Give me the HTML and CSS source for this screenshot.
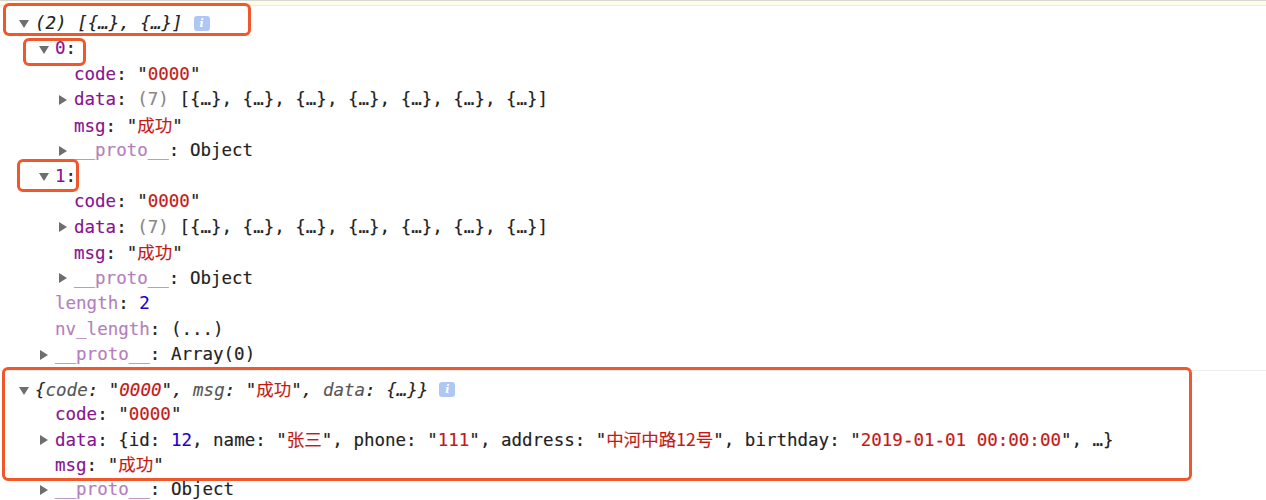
FILE: index.html
```html
<!DOCTYPE html>
<html>
<head>
<meta charset="utf-8">
<link rel="stylesheet" href="styles.css">
</head>
<body>
<div class="topstrip"></div>
<div class="console">
  <div class="block first">
    <div class="row l0"><span class="tri down"></span><span class="txt summary">(2) [{…}, {…}]</span><span class="info">i</span></div>
    <div class="row l1"><span class="tri down"></span><span class="txt"><span class="key">0</span>:</span></div>
    <div class="row l2"><span class="tri none"></span><span class="txt"><span class="key">code</span>: "<span class="str">0000</span>"</span></div>
    <div class="row l2"><span class="tri right"></span><span class="txt"><span class="key">data</span>: <span class="gray">(7)</span> [{…}, {…}, {…}, {…}, {…}, {…}, {…}]</span></div>
    <div class="row l2"><span class="tri none"></span><span class="txt"><span class="key">msg</span>: "<span class="str cjk">成功</span>"</span></div>
    <div class="row l2"><span class="tri right"></span><span class="txt"><span class="key dim">__proto__</span>: Object</span></div>
    <div class="row l1"><span class="tri down"></span><span class="txt"><span class="key">1</span>:</span></div>
    <div class="row l2"><span class="tri none"></span><span class="txt"><span class="key">code</span>: "<span class="str">0000</span>"</span></div>
    <div class="row l2"><span class="tri right"></span><span class="txt"><span class="key">data</span>: <span class="gray">(7)</span> [{…}, {…}, {…}, {…}, {…}, {…}, {…}]</span></div>
    <div class="row l2"><span class="tri none"></span><span class="txt"><span class="key">msg</span>: "<span class="str cjk">成功</span>"</span></div>
    <div class="row l2"><span class="tri right"></span><span class="txt"><span class="key dim">__proto__</span>: Object</span></div>
    <div class="row l1"><span class="tri none"></span><span class="txt"><span class="key dim">length</span>: <span class="num">2</span></span></div>
    <div class="row l1"><span class="tri none"></span><span class="txt"><span class="key dim">nv_length</span>: (...)</span></div>
    <div class="row l1"><span class="tri right"></span><span class="txt"><span class="key dim">__proto__</span>: Array(0)</span></div>
  </div>
  <div class="block second">
    <div class="row l0"><span class="tri down"></span><span class="txt summary">{<span class="pkey">code</span>: "<span class="str">0000</span>", <span class="pkey">msg</span>: "<span class="str cjk">成功</span>", <span class="pkey">data</span>: {…}}</span><span class="info">i</span></div>
    <div class="row l1"><span class="tri none"></span><span class="txt"><span class="key">code</span>: "<span class="str">0000</span>"</span></div>
    <div class="row l1"><span class="tri right"></span><span class="txt"><span class="key">data</span>: {id: <span class="num">12</span>, name: "<span class="str cjk">张三</span>", phone: "<span class="str">111</span>", address: "<span class="str cjk">中河中路12号</span>", birthday: "<span class="str">2019-01-01 00:00:00</span>", …}</span></div>
    <div class="row l1"><span class="tri none"></span><span class="txt"><span class="key">msg</span>: "<span class="str cjk">成功</span>"</span></div>
    <div class="row l1"><span class="tri right"></span><span class="txt"><span class="key dim">__proto__</span>: Object</span></div>
  </div>
</div>
<div class="mark m1"></div>
<div class="mark m2"></div>
<div class="mark m3"></div>
<div class="mark m4"></div>
</body>
</html>
```

FILE: styles.css
```css
html, body {
  margin: 0;
  padding: 0;
  background: #ffffff;
}
body {
  width: 1266px;
  height: 500px;
  overflow: hidden;
  position: relative;
  font-family: "DejaVu Sans Mono", "Liberation Mono", "Noto Sans CJK SC", monospace;
  font-size: 17.5px;
  color: #222222;
  -webkit-text-stroke: 0.15px currentColor;
}
.topstrip {
  height: 4px;
  border-top: 1px solid #d6d6d6;
  background: #fffbe6;
  border-bottom: 1px solid #f3ecc8;
}
.block.first {
  padding-top: 4.5px;
  padding-bottom: 2.5px;
  border-bottom: 1px solid #eeeeee;
}
.block.second {
  padding-top: 6px;
}
.row {
  height: 25.5px;
  line-height: 25.5px;
  white-space: nowrap;
  display: flex;
  align-items: center;
}
.second .row {
  height: 25px;
  line-height: 25px;
}
.txt {
  white-space: pre;
}
.l0 { padding-left: 18px; }
.l1 { padding-left: 38px; }
.l2 { padding-left: 57px; }
.tri {
  width: 17px;
  height: 10px;
  flex: none;
  position: relative;
}
.tri.down::before {
  content: "";
  position: absolute;
  left: 1px;
  top: 2px;
  border-left: 5px solid transparent;
  border-right: 5px solid transparent;
  border-top: 8px solid #6e6e6e;
}
.tri.right::before {
  content: "";
  position: absolute;
  left: 2px;
  top: 0;
  border-top: 5px solid transparent;
  border-bottom: 5px solid transparent;
  border-left: 8px solid #6e6e6e;
}
.summary {
  font-style: italic;
  color: #222222;
}
.pkey { color: #555555; }
.key { color: #881391; }
.key.dim { color: #b47fbd; }
.str { color: #c41a16; }
.num { color: #1c00cf; }
.gray { color: #888888; }
.cjk {
  font-family: "Noto Sans CJK SC", sans-serif;
  font-style: normal;
}
.info {
  display: inline-flex;
  align-items: center;
  justify-content: center;
  flex: none;
  width: 16px;
  height: 15px;
  margin-left: 11px;
  border-radius: 3px;
  background: #aec7f5;
  color: #ffffff;
  -webkit-text-stroke: 0;
  font-family: "DejaVu Serif", serif;
  font-style: italic;
  font-weight: bold;
  font-size: 11px;
  line-height: 15px;
}
.mark {
  position: absolute;
  border: 3px solid #f0572a;
  border-radius: 6px;
  box-sizing: border-box;
}
.m1 { left: 3px; top: 3px; width: 248px; height: 33px; }
.m2 { left: 23px; top: 38px; width: 63px; height: 28px; }
.m3 { left: 17px; top: 159px; width: 62px; height: 33px; }
.m4 { left: 2px; top: 367px; width: 1190px; height: 114px; }
```
